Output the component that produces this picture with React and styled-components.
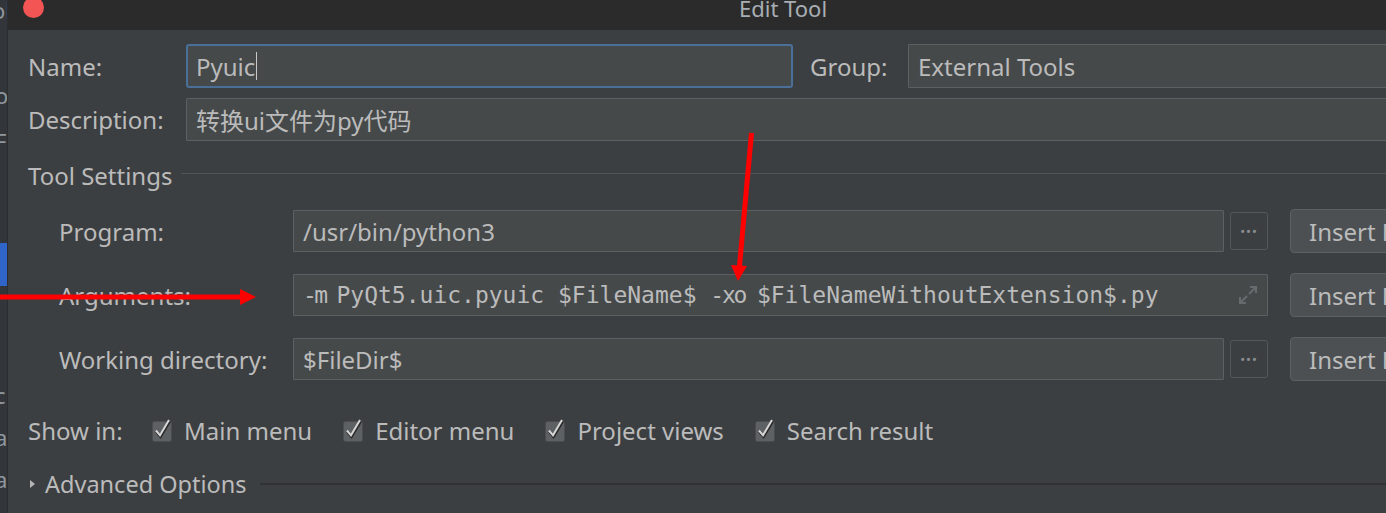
import React from "react";
import styled, { createGlobalStyle } from "styled-components";

const GlobalStyle = createGlobalStyle`
  html, body {
    margin: 0;
    padding: 0;
    background: #3c3f41;
  }
  body {
    width: 1386px;
    height: 513px;
    overflow: hidden;
    font-family: "Noto Sans", "Open Sans", "Noto Sans CJK SC", sans-serif;
    color: #bbbbbb;
  }
`;

const Page = styled.div`
  position: relative;
  display: flex;
  width: 1386px;
  height: 513px;
  overflow: hidden;
`;

// ide panel peeking out on the left
const Strip = styled.div`
  box-sizing: border-box;
  width: 8px;
  flex: none;
  background: #32363b;
  display: flex;
  flex-direction: column;
  overflow: hidden;
  border-right: 1px solid #2b2d30;
`;

const StripItem = styled.div`
  height: ${p => p.$h}px;
  flex: none;
  font-size: 22px;
  line-height: ${p => p.$h}px;
  color: #8f969d;
  white-space: nowrap;
  text-indent: ${p => p.$shift || 0}px;
  background: ${p => (p.$blue ? "#2f65c9" : "transparent")};
`;

const Dialog = styled.div`
  flex: 1;
  min-width: 0;
  display: flex;
  flex-direction: column;
  background: #3c3f41;
  overflow: hidden;
`;

const TitleBar = styled.div`
  height: 30px;
  flex: none;
  background: #2b2b2b;
  display: flex;
  align-items: flex-start;
  padding-left: 15px;
  overflow: hidden;
`;

const CloseDot = styled.span`
  width: 21px;
  height: 21px;
  flex: none;
  border-radius: 50%;
  background: #f35555;
  margin-top: -3px;
`;

const Title = styled.div`
  margin-left: 695px;
  margin-top: -3px;
  font-size: 22px;
  line-height: 22px;
  color: #a8aeb4;
  white-space: nowrap;
`;

const Body = styled.div`
  display: flex;
  flex-direction: column;
  padding: 14px 0 0 20px;
`;

const Row = styled.div`
  display: flex;
  align-items: center;
  height: ${p => p.$h || 44}px;
  margin-top: ${p => p.$mt || 0}px;
  flex: none;
`;

const Label = styled.div`
  width: ${p => p.$w}px;
  margin-left: ${p => p.$ml || 0}px;
  flex: none;
  font-size: 24px;
  white-space: nowrap;
`;

const Field = styled.div`
  box-sizing: border-box;
  width: ${p => p.$w}px;
  height: ${p => p.$h || 42}px;
  flex: none;
  display: flex;
  align-items: center;
  padding: 0 ${p => (p.$focus ? 8 : 9)}px;
  background: #45494a;
  border: ${p => (p.$focus ? "2px solid #4a6f98" : "1px solid #5d6062")};
  border-radius: ${p => (p.$focus ? 3 : 1)}px;
  font-size: 24px;
  color: #bbbbbb;
  white-space: nowrap;
  overflow: hidden;
`;

const Caret = styled.span`
  display: inline-block;
  width: 1px;
  height: 28px;
  background: #c8c8c8;
  margin-left: 1px;
`;

const Mono = styled.span`
  flex: 1;
  font-family: "DejaVu Sans Mono", "Liberation Mono", monospace;
  font-size: 23px;
  white-space: pre;
`;

// option flags are drawn a little tighter than the rest
const Flag = styled.span`
  letter-spacing: ${p => p.$ls}px;
`;

const Section = styled.div`
  display: flex;
  align-items: center;
  height: 32px;
  margin-top: ${p => p.$mt}px;
  font-size: ${p => p.$fs || 24}px;
  white-space: nowrap;
`;

const Rule = styled.div`
  flex: 1;
  height: ${p => p.$t || 1}px;
  margin-left: ${p => p.$ml}px;
  margin-top: ${p => p.$dy || 0}px;
  background: ${p => p.$c};
`;

const Tools = styled.div`
  display: flex;
  flex-direction: column;
  padding-left: 31px;
`;

const Browse = styled.div`
  box-sizing: border-box;
  width: 38px;
  height: 38px;
  margin-left: 6px;
  flex: none;
  display: flex;
  align-items: center;
  justify-content: center;
  border: 1px solid #55585b;
  border-radius: 3px;
  background: #3c3f41;
  color: #8c9094;
  font-size: 13px;
  letter-spacing: 1px;
`;

const InsertButton = styled.div`
  box-sizing: border-box;
  width: 170px;
  height: 44px;
  margin-left: 22px;
  flex: none;
  display: flex;
  align-items: center;
  padding-left: 18px;
  background: #4c5052;
  border: 1px solid #5d6062;
  border-radius: 4px;
  font-size: 24px;
  white-space: nowrap;
`;

const Checks = styled.div`
  display: flex;
  align-items: center;
  gap: 31px;
`;

const Check = styled.label`
  display: flex;
  align-items: center;
  gap: 11px;
  font-size: 24px;
  white-space: nowrap;
`;

const Triangle = styled.span`
  width: 0;
  height: 0;
  margin: 0 10px 0 2px;
  border-top: 4px solid transparent;
  border-bottom: 4px solid transparent;
  border-left: 5px solid #b5b5b5;
`;

const Overlay = styled.svg`
  position: absolute;
  left: 0;
  top: 0;
  pointer-events: none;
`;

function CheckIcon() {
  return (
    <svg width="21" height="24" viewBox="0 0 21 24">
      <rect x="0.5" y="3.5" width="19" height="20" rx="2" fill="#5e6163" stroke="#4a4c4e" />
      <path d="M4.5 13.5 L8.5 18.5 L17.5 3.5" fill="none" stroke="#2a2a2a" strokeWidth="3" />
      <path d="M4 12.5 L8 17.2 L17 2" fill="none" stroke="#d6d6d6" strokeWidth="2" />
    </svg>
  );
}

function ExpandIcon() {
  return (
    <svg width="20" height="20" viewBox="0 0 20 20">
      <path
        d="M11 9 L18 2 M12 2 H18 V8 M9 11 L2 18 M2 12 V18 H8"
        fill="none"
        stroke="#676b6e"
        strokeWidth="2"
      />
    </svg>
  );
}

function Arrows() {
  return (
    <Overlay width="1386" height="513" viewBox="0 0 1386 513">
      <line x1="0" y1="297" x2="242" y2="297" stroke="#ff0000" strokeWidth="5" />
      <polygon points="240,289 256,297 240,305" fill="#ff0000" />
      <line x1="751.5" y1="133" x2="739.5" y2="266" stroke="#ff0000" strokeWidth="5" />
      <polygon points="731,265 747,266 738,281" fill="#ff0000" />
    </Overlay>
  );
}

const showIn = ["Main menu", "Editor menu", "Project views", "Search result"];

export default function App() {
  return (
    <Page>
      <GlobalStyle />
      <Strip>
        <StripItem $h={20} $shift={-8}>ol</StripItem>
        <StripItem $h={62} />
        <StripItem $h={26} $shift={-5}>o</StripItem>
        <StripItem $h={20} />
        <StripItem $h={26} $shift={-5}>F</StripItem>
        <StripItem $h={89} />
        <StripItem $h={43} $blue />
        <StripItem $h={96} />
        <StripItem $h={26} $shift={-5}>c</StripItem>
        <StripItem $h={16} />
        <StripItem $h={26} $shift={-5}>a</StripItem>
        <StripItem $h={16} />
        <StripItem $h={26} $shift={-5}>a</StripItem>
      </Strip>

      <Dialog>
        <TitleBar>
          <CloseDot />
          <Title>Edit Tool</Title>
        </TitleBar>

        <Body>
          <Row $h={44}>
            <Label $w={158}>Name:</Label>
            <Field $w={607} $h={44} $focus>
              Pyuic<Caret />
            </Field>
            <Label $w={98} $ml={17}>Group:</Label>
            <Field $w={600} $h={44}>External Tools</Field>
          </Row>

          <Row $h={43} $mt={10}>
            <Label $w={158}>Description:</Label>
            <Field $w={1300} $h={43}>转换ui文件为py代码</Field>
          </Row>

          <Section $mt={18}>
            Tool Settings
            <Rule $ml={9} $c="#515457" $dy={-3} />
          </Section>

          <Tools>
            <Row $mt={18}>
              <Label $w={234}>Program:</Label>
              <Field $w={931}>/usr/bin/python3</Field>
              <Browse>•••</Browse>
              <InsertButton>Insert Macro...</InsertButton>
            </Row>
            <Row $mt={20}>
              <Label $w={234}>Arguments:</Label>
              <Field $w={975}>
                <Mono>
                  <Flag $ls={-2.7}>-m </Flag>PyQt5.uic.pyuic $FileName$ <Flag $ls={-2.2}>-xo </Flag>$FileNameWithoutExtension$.py
                </Mono>
                <ExpandIcon />
              </Field>
              <InsertButton>Insert Macro...</InsertButton>
            </Row>
            <Row $mt={20}>
              <Label $w={234}>Working directory:</Label>
              <Field $w={931}>$FileDir$</Field>
              <Browse>•••</Browse>
              <InsertButton>Insert Macro...</InsertButton>
            </Row>
          </Tools>

          <Row $h={32} $mt={33}>
            <Label $w={124}>Show in:</Label>
            <Checks>
              {showIn.map(name => (
                <Check key={name}>
                  <CheckIcon />
                  {name}
                </Check>
              ))}
            </Checks>
          </Row>

          <Section $mt={22} $fs={23.5}>
            <Triangle />
            Advanced Options
            <Rule $ml={13} $t={2} $c="#2f3133" />
          </Section>
        </Body>
      </Dialog>

      <Arrows />
    </Page>
  );
}
